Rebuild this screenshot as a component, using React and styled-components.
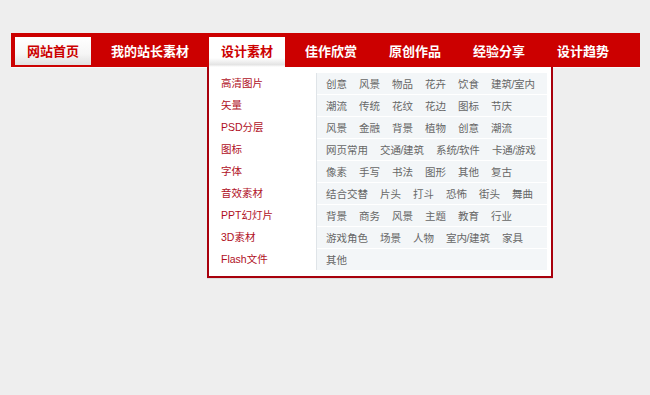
import React from "react";
import styled, { createGlobalStyle } from "styled-components";

const Global = createGlobalStyle`
  html, body { margin: 0; padding: 0; background: #eeeeee; }
  body { font-family: "Liberation Sans", "Noto Sans CJK SC", sans-serif; }
  a { text-decoration: none; }
`;

const Page = styled.div`
  padding: 33px 0 0 11px;
  height: 362px;
`;

const Nav = styled.nav`
  display: flex;
  align-items: flex-start;
  width: 629px;
  height: 34px;
  background: #cc0000;
  box-shadow: 0 1px 0 #f8f8f8;
`;

const Item = styled.div`
  position: relative;
  padding: 4px 4px 0;
`;

const Tab = styled.a`
  display: block;
  height: ${(p) => (p.$open ? 30 : 28)}px;
  line-height: 28px;
  padding: 0 12px;
  font-family: "Noto Sans CJK SC", sans-serif;
  font-size: 13px;
  font-weight: 700;
  color: ${(p) => (p.$light ? "#cc0000" : "#ffffff")};
  background: ${(p) =>
    p.$light
      ? p.$open
        ? "linear-gradient(#ffffff 0%, #ffffff 70%, #e4e4e4 92%, #ffffff 100%)"
        : "linear-gradient(#ffffff 0%, #f6f6f6 60%, #e0e0e0 100%)"
      : "transparent"};
  white-space: nowrap;
`;

const Dropdown = styled.div`
  position: absolute;
  left: 2px;
  top: 34px;
  z-index: 5;
  display: flex;
  align-items: flex-start;
  background: #ffffff;
  border: 2px solid #a8000c;
  border-top: none;
  padding: 6px 4px 5px 0;
  width: 338px;
  box-shadow: 0 1px 0 #dcdcdc;
`;

const Categories = styled.ul`
  list-style: none;
  margin: 0;
  padding: 0 0 0 12px;
  width: 95px;
`;

const Category = styled.li`
  height: 22px;
  line-height: 21px;
  font-size: 10.5px;
  color: #b0101e;
  white-space: nowrap;
`;

const Panel = styled.div`
  width: 230px;
  border-left: 1px solid #dfe4e8;
  display: flex;
  flex-direction: column;
  gap: 1px;
`;

const Row = styled.div`
  display: flex;
  height: 21px;
  align-items: center;
  padding-left: 9px;
  background: #f3f6f8;
`;

const Link = styled.a`
  font-size: 10.5px;
  color: #666666;
  margin-right: 12px;
  white-space: nowrap;
`;

const Slash = styled.span`
  margin: 0 -0.5px;
`;

const navItems = [
  { label: "网站首页", light: true },
  { label: "我的站长素材" },
  { label: "设计素材", light: true, open: true },
  { label: "佳作欣赏" },
  { label: "原创作品" },
  { label: "经验分享" },
  { label: "设计趋势" },
];

const categories = [
  "高清图片",
  "矢量",
  "PSD分层",
  "图标",
  "字体",
  "音效素材",
  "PPT幻灯片",
  "3D素材",
  "Flash文件",
];

const rows = [
  ["创意", "风景", "物品", "花卉", "饮食", "建筑/室内"],
  ["潮流", "传统", "花纹", "花边", "图标", "节庆"],
  ["风景", "金融", "背景", "植物", "创意", "潮流"],
  ["网页常用", "交通/建筑", "系统/软件", "卡通/游戏"],
  ["像素", "手写", "书法", "图形", "其他", "复古"],
  ["结合交替", "片头", "打斗", "恐怖", "街头", "舞曲"],
  ["背景", "商务", "风景", "主题", "教育", "行业"],
  ["游戏角色", "场景", "人物", "室内/建筑", "家具"],
  ["其他"],
];

const renderWord = (w) => {
  const parts = w.split("/");
  if (parts.length === 1) return w;
  return (
    <>
      {parts[0]}
      <Slash>/</Slash>
      {parts[1]}
    </>
  );
};

export default function App() {
  return (
    <>
      <Global />
      <Page>
        <Nav>
          {navItems.map((n) => (
            <Item key={n.label}>
              <Tab href="#" $light={n.light} $open={n.open}>
                {n.label}
              </Tab>
              {n.open && (
                <Dropdown>
                  <Categories>
                    {categories.map((c) => (
                      <Category key={c}>{c}</Category>
                    ))}
                  </Categories>
                  <Panel>
                    {rows.map((r, i) => (
                      <Row key={i}>
                        {r.map((w, j) => (
                          <Link href="#" key={j}>
                            {renderWord(w)}
                          </Link>
                        ))}
                      </Row>
                    ))}
                  </Panel>
                </Dropdown>
              )}
            </Item>
          ))}
        </Nav>
      </Page>
    </>
  );
}
